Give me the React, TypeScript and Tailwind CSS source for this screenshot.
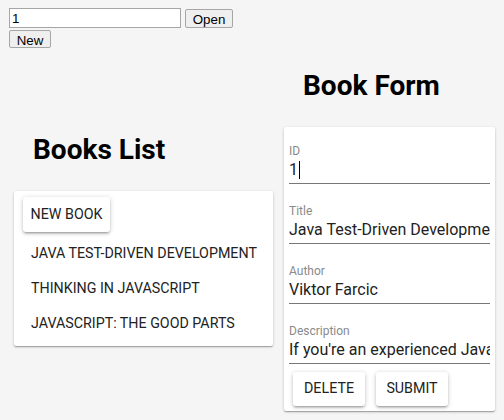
const books = [
  "Java Test-Driven Development",
  "Thinking in JavaScript",
  "JavaScript: The Good Parts",
];

const fields = [
  { label: "ID", value: "1", caret: true },
  { label: "Title", value: "Java Test-Driven Development" },
  { label: "Author", value: "Viktor Farcic" },
  {
    label: "Description",
    value: "If you're an experienced Java developer, learn TDD",
  },
];

const raised =
  "rounded-[3px] bg-white shadow-[0_1px_5px_rgba(0,0,0,0.2),0_2px_2px_rgba(0,0,0,0.14),0_3px_1px_-2px_rgba(0,0,0,0.12)]";
const card =
  "bg-white rounded-[2px] shadow-[0_1px_3px_rgba(0,0,0,0.2),0_1px_1px_rgba(0,0,0,0.14),0_2px_1px_-1px_rgba(0,0,0,0.12)]";

export default function App() {
  return (
    <div className="min-h-[420px] bg-[#f5f5f5] font-['Roboto',sans-serif] text-[#222]">
      {/* plain browser controls */}
      <div className="pl-[9px] pt-[8px] font-['Liberation_Sans',Arial,sans-serif] text-[13.33px] text-black">
        <div className="flex items-center gap-[4px]">
          <input
            className="h-[20px] w-[172px] border border-[#a6a6a6] bg-white px-[2px] outline-none"
            defaultValue="1"
          />
          <button className="h-[19px] w-[48px] rounded-[2px] border border-[#a6a6a6] bg-[#efefef]">
            Open
          </button>
        </div>
        <button className="mt-[2px] h-[18px] w-[42px] rounded-[2px] border border-[#a6a6a6] bg-[#efefef]">
          New
        </button>
      </div>

      <div className="mt-[19px] flex items-center">
        {/* books list */}
        <div className="ml-[14px] w-[259px]">
          <h1 className="mb-[25px] pl-[19px] text-[28px] font-bold leading-[32px] text-black">
            Books List
          </h1>
          <div className={`${card} pt-[6px] pb-[5px] pl-[9px]`}>
            <button className={`${raised} h-[35px] w-[87px] text-[14.25px] uppercase`}>
              New Book
            </button>
            <div className="mt-[4px]">
              {books.map((b) => (
                <div key={b} className="flex h-[35px] items-center pl-[8px] text-[14.25px] uppercase">
                  {b}
                </div>
              ))}
            </div>
          </div>
        </div>

        {/* book form */}
        <div className="ml-[11px] w-[211px]">
          <h1 className="mb-[25px] pl-[19px] text-[28px] font-bold leading-[32px] text-black">
            Book Form
          </h1>
          <div className={`${card} px-[5px] pt-[17px] pb-[5px]`}>
            <div className="flex flex-col gap-[20px]">
              {fields.map((f) => (
                <div key={f.label}>
                  <div className="text-[12px] leading-[14px] text-[#8a8a8a]">{f.label}</div>
                  <div className="flex h-[26px] items-center overflow-hidden whitespace-nowrap border-b border-[#777] text-[16px]">
                    {f.value}
                    {f.caret && <span className="ml-[1px] inline-block h-[18px] w-[1px] bg-black" />}
                  </div>
                </div>
              ))}
            </div>
            <div className="mt-[8px] flex gap-[11px] pl-[4px]">
              <button className={`${raised} h-[34px] w-[72px] text-[14.25px]`}>DELETE</button>
              <button className={`${raised} h-[34px] w-[72px] text-[14.25px]`}>SUBMIT</button>
            </div>
          </div>
        </div>
      </div>
    </div>
  );
}
